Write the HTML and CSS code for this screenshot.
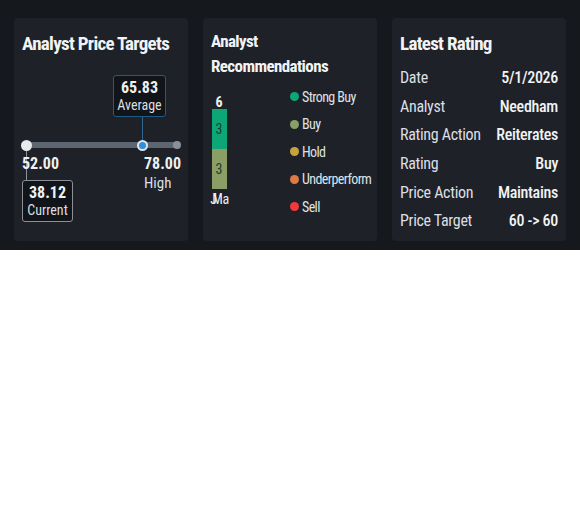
FILE: index.html
```html
<!DOCTYPE html>
<html lang="en">
<head>
  <meta charset="UTF-8">
  <meta name="viewport" content="width=device-width, initial-scale=1.0">
  <title>Analyst Ratings</title>
  <link rel="stylesheet" href="styles.css">
</head>
<body>
  <div class="board">
    <section class="card">
      <h2 class="card-title">Analyst Price Targets</h2>
      <div class="targets">
        <div class="track"></div>
        <div class="tag tag-avg">
          <strong>65.83</strong>
          <span>Average</span>
        </div>
        <div class="stem stem-avg"></div>
        <div class="stem stem-cur"></div>
        <div class="dot dot-cur"></div>
        <div class="dot dot-avg"></div>
        <div class="dot dot-high"></div>
        <div class="scale scale-low"><strong>52.00</strong></div>
        <div class="scale scale-high"><strong>78.00</strong><span>High</span></div>
        <div class="tag tag-cur">
          <strong>38.12</strong>
          <span>Current</span>
        </div>
      </div>
    </section>

    <section class="card">
      <h2 class="card-title small">Analyst Recommendations</h2>
      <div class="recs">
        <div class="bars">
          <div class="bar-total">6</div>
          <div class="bar">
            <div class="seg seg-strong">3</div>
            <div class="seg seg-buy">3</div>
          </div>
          <div class="bar-label">Ma<span class="ghost">J</span></div>
        </div>
        <ul class="legend">
          <li><i class="swatch strong"></i>Strong Buy</li>
          <li><i class="swatch buy"></i>Buy</li>
          <li><i class="swatch hold"></i>Hold</li>
          <li><i class="swatch under"></i>Underperform</li>
          <li><i class="swatch sell"></i>Sell</li>
        </ul>
      </div>
    </section>

    <section class="card">
      <h2 class="card-title">Latest Rating</h2>
      <dl class="rating">
        <div class="row"><dt>Date</dt><dd>5/1/2026</dd></div>
        <div class="row"><dt>Analyst</dt><dd>Needham</dd></div>
        <div class="row"><dt>Rating Action</dt><dd>Reiterates</dd></div>
        <div class="row"><dt>Rating</dt><dd>Buy</dd></div>
        <div class="row"><dt>Price Action</dt><dd>Maintains</dd></div>
        <div class="row"><dt>Price Target</dt><dd>60 -&gt; 60</dd></div>
      </dl>
    </section>
  </div>
</body>
</html>
```
FILE: styles.css
```css
body {
  margin: 0;
  background: #fff;
  font-family: "Roboto Condensed", Roboto, sans-serif;
  font-stretch: 75%;
  color: #eef0f2;
}
.board {
  height: 250px;
  box-sizing: border-box;
  background: #15181d;
  padding: 18px 14px 0;
  display: grid;
  grid-template-columns: repeat(3, 174px);
  gap: 15px;
  align-items: start;
}
.card {
  height: 223px;
  box-sizing: border-box;
  background: #1e2228;
  border-radius: 4px;
  padding: 14px 8px 0 8px;
}
.card-title {
  margin: 0;
  font-size: 19px;
  line-height: 24px;
  font-weight: bold;
  letter-spacing: -0.7px;
  color: #f2f3f5;
}
.card-title.small {
  margin-top: -3px;
  font-size: 17px;
  line-height: 25px;
  letter-spacing: -0.6px;
}

/* price targets */
.targets {
  position: relative;
  height: 170px;
}
.track {
  position: absolute;
  left: 4px;
  top: 86px;
  width: 151px;
  height: 6px;
  border-radius: 3px;
  background: #5d6570;
}
.dot {
  position: absolute;
  border-radius: 50%;
  box-sizing: border-box;
}
.dot-cur {
  left: -1px;
  top: 84px;
  width: 11px;
  height: 11px;
  background: #e9eaec;
}
.dot-avg {
  left: 115px;
  top: 84px;
  width: 11px;
  height: 11px;
  background: #2f8fdc;
  border: 2px solid #dfe6ee;
}
.dot-high {
  left: 151px;
  top: 85px;
  width: 8px;
  height: 8px;
  background: #8a9099;
}
.stem {
  position: absolute;
  width: 1px;
}
.stem-avg {
  left: 120px;
  top: 61px;
  height: 24px;
  background: #2c6690;
}
.stem-cur {
  left: 4px;
  top: 94px;
  height: 30px;
  background: #8e9298;
}
.tag {
  position: absolute;
  display: flex;
  flex-direction: column;
  align-items: center;
  box-sizing: border-box;
  border-radius: 3px;
  background: #111419;
  padding-top: 3px;
}
.tag strong {
  font-size: 16px;
  line-height: 18px;
}
.tag span {
  font-size: 14px;
  line-height: 17px;
  color: #dcdfe3;
}
.tag-avg {
  left: 91px;
  top: 19px;
  width: 53px;
  height: 42px;
  border: 1px solid #215a82;
}
.tag-cur {
  left: 0;
  top: 124px;
  width: 51px;
  height: 42px;
  border: 1px solid #8c9096;
}
.scale {
  position: absolute;
  top: 98px;
  display: flex;
  flex-direction: column;
}
.scale strong {
  font-size: 16px;
  line-height: 20px;
}
.scale span {
  font-size: 15px;
  line-height: 18px;
  color: #dcdfe3;
}
.scale-low {
  left: 0;
}
.scale-high {
  left: 122px;
}

/* recommendations */
.recs {
  display: flex;
  margin-top: 11px;
}
.bars {
  position: relative;
  width: 16px;
  display: flex;
  flex-direction: column;
  align-items: center;
  margin-top: 5px;
}
.bar-total {
  font-size: 14px;
  line-height: 14px;
  font-weight: bold;
}
.bar {
  width: 15px;
  display: flex;
  flex-direction: column;
}
.seg {
  height: 40px;
  display: flex;
  align-items: center;
  justify-content: center;
  font-size: 14px;
  color: #1d3b2d;
}
.seg-strong {
  background: #0da676;
}
.seg-buy {
  background: #8a9e66;
}
.bar-label {
  position: relative;
  margin-top: 2px;
  font-size: 14px;
  line-height: 16px;
  letter-spacing: -0.5px;
  padding-left: 3px;
}
.ghost {
  position: absolute;
  left: 1px;
  top: 0;
}
.legend {
  list-style: none;
  margin: 0 0 0 63px;
  padding: 0;
}
.legend li {
  display: flex;
  align-items: center;
  height: 27.5px;
  font-size: 14px;
  letter-spacing: -0.6px;
  color: #dfe2e6;
}
.legend li:first-child {
  margin-top: -7px;
}
.swatch {
  width: 9px;
  height: 9px;
  border-radius: 50%;
  margin-right: 3px;
}
.strong { background: #0da676; }
.buy { background: #8a9e66; }
.hold { background: #c7a33c; }
.under { background: #dc7a44; }
.sell { background: #f0393d; }

/* latest rating */
.rating {
  margin: 7px 0 0;
}
.row {
  display: flex;
  justify-content: space-between;
  height: 28.7px;
  align-items: center;
  font-size: 16px;
  letter-spacing: -0.3px;
}
.row dt {
  color: #dcdfe3;
}
.row dd {
  margin: 0;
  font-weight: 500;
  color: #f2f3f5;
}
```
